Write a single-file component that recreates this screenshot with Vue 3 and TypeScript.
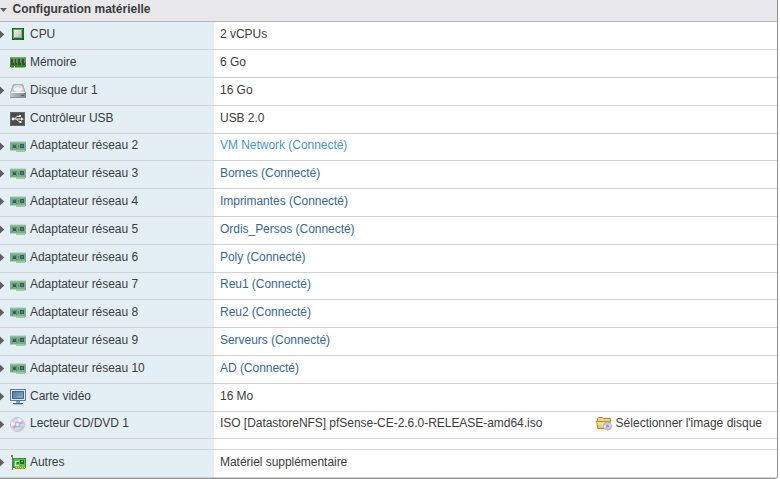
<script setup lang="ts">
type Icon = 'cpu' | 'memory' | 'disk' | 'usb' | 'nic' | 'video' | 'cd' | 'other'

interface Row {
  label: string
  value: string
  icon: Icon
  arrow?: boolean
  link?: boolean
  hover?: boolean
  short?: boolean
  action?: string
  gapAfter?: boolean
}

const rows: Row[] = [
  { label: 'CPU', value: '2 vCPUs', icon: 'cpu', arrow: true },
  { label: 'Mémoire', value: '6 Go', icon: 'memory' },
  { label: 'Disque dur 1', value: '16 Go', icon: 'disk', arrow: true },
  { label: 'Contrôleur USB', value: 'USB 2.0', icon: 'usb' },
  { label: 'Adaptateur réseau 2', value: 'VM Network (Connecté)', icon: 'nic', arrow: true, link: true, hover: true, short: true },
  { label: 'Adaptateur réseau 3', value: 'Bornes (Connecté)', icon: 'nic', arrow: true, link: true },
  { label: 'Adaptateur réseau 4', value: 'Imprimantes (Connecté)', icon: 'nic', arrow: true, link: true },
  { label: 'Adaptateur réseau 5', value: 'Ordis_Persos (Connecté)', icon: 'nic', arrow: true, link: true },
  { label: 'Adaptateur réseau 6', value: 'Poly (Connecté)', icon: 'nic', arrow: true, link: true },
  { label: 'Adaptateur réseau 7', value: 'Reu1 (Connecté)', icon: 'nic', arrow: true, link: true, short: true },
  { label: 'Adaptateur réseau 8', value: 'Reu2 (Connecté)', icon: 'nic', arrow: true, link: true },
  { label: 'Adaptateur réseau 9', value: 'Serveurs (Connecté)', icon: 'nic', arrow: true, link: true },
  { label: 'Adaptateur réseau 10', value: 'AD (Connecté)', icon: 'nic', arrow: true, link: true },
  { label: 'Carte vidéo', value: '16 Mo', icon: 'video', arrow: true },
  { label: 'Lecteur CD/DVD 1', value: 'ISO [DatastoreNFS] pfSense-CE-2.6.0-RELEASE-amd64.iso', icon: 'cd', arrow: true, short: true, action: "Sélectionner l'image disque", gapAfter: true },
  { label: 'Autres', value: 'Matériel supplémentaire', icon: 'other', arrow: true },
]
</script>

<template>
  <section class="panel">
    <svg class="defs" width="0" height="0" aria-hidden="true">
      <defs>
        <linearGradient id="gSilver" x1="0" y1="0" x2="1" y2="1">
          <stop offset="0" stop-color="#f4f4f4" /><stop offset="1" stop-color="#b4b4b4" />
        </linearGradient>
        <linearGradient id="gGreen" x1="0" y1="0" x2="0" y2="1">
          <stop offset="0" stop-color="#5aa545" /><stop offset="1" stop-color="#2a8d22" />
        </linearGradient>
        <linearGradient id="gDisk" x1="0" y1="0" x2="0" y2="1">
          <stop offset="0" stop-color="#aeb5bc" /><stop offset="1" stop-color="#dce2e8" />
        </linearGradient>
        <linearGradient id="gBase" x1="0" y1="0" x2="1" y2="0">
          <stop offset="0" stop-color="#c3cad0" /><stop offset="1" stop-color="#79828b" />
        </linearGradient>
        <linearGradient id="gScreen" x1="0" y1="0" x2="1" y2="1">
          <stop offset="0" stop-color="#4f7294" /><stop offset="1" stop-color="#93b2ce" />
        </linearGradient>
        <linearGradient id="gFolder" x1="0" y1="0" x2="0" y2="1">
          <stop offset="0" stop-color="#fbe9b6" /><stop offset="1" stop-color="#ecbc58" />
        </linearGradient>
        <linearGradient id="gDisc" x1="0" y1="0" x2="1" y2="1">
          <stop offset="0" stop-color="#c9cad5" /><stop offset="0.5" stop-color="#e6e3ee" /><stop offset="1" stop-color="#bcbfcc" />
        </linearGradient>
      </defs>
    </svg>

    <header class="title">
      <svg class="caret" width="8" height="5" viewBox="0 0 8 5"><path d="M0 0h7L3.500 4z" fill="#606060" /></svg>
      <span>Configuration matérielle</span>
    </header>

    <template v-for="row in rows" :key="row.label">
      <div class="row" :class="{ short: row.short }">
        <div class="name">
          <svg class="arrow" width="5" height="9" viewBox="0 0 5 9"><path v-if="row.arrow" d="M0 .5L4.200 4.500L0 8.500z" fill="#606060" /></svg>
          <svg class="icon" width="16" height="17" viewBox="0 0 16 17">
            <g v-if="row.icon === 'cpu'">
              <path d="M2 2h12v12H2z" fill="#16751a" />
              <path d="M3 3h10v1H4v9H3z" fill="#59af50" />
              <path d="M2 2h2v1H3v1H2zM12 2h2v2h-1V3h-1zM2 12h1v1h1v1H2zM13 12h1v2h-2v-1h1z" fill="#07540d" />
              <path d="M4 4h8v8H4z" fill="url(#gSilver)" />
              <path d="M4 11h8v1H4zM11 4h1v8h-1z" fill="#9ca49c" />
            </g>
            <g v-else-if="row.icon === 'memory'">
              <path d="M0 3h16v9H0z" fill="url(#gGreen)" />
              <path d="M0 3h16v1H0z" fill="#72a967" />
              <path d="M1 5h3v6H1zM5 5h2v6H5zM8 5h3v6H8zM12 5h3v6h-3z" fill="#404740" />
              <path d="M3 5h1v4H3zM6 5h1v4H6zM10 5h1v4h-1zM14 5h1v4h-1z" fill="#7a8477" />
              <path d="M0 12h4v1H0zM5 12h11v1H5z" fill="#278d1e" />
              <path d="M1 13h3v1H1zM5 13h10v1H5z" fill="#b0b365" />
            </g>
            <g v-else-if="row.icon === 'disk'" transform="translate(0 1)">
              <path d="M3 1h10l2.500 9v4.500H.5V10z" fill="url(#gDisk)" />
              <path d="M3.500 1.500L.5 10M12.500 1.500L15.500 10" stroke="#a4adb5" fill="none" />
              <ellipse cx="8" cy="5.500" rx="4.500" ry="3.200" fill="#eef1f4" />
              <path d="M5 4.500q3-2 6 0" stroke="#c6ccd2" fill="none" />
              <path d="M1 9h14v1H1z" fill="#f5f8fa" />
              <path d="M0 10h16v4H0z" fill="url(#gBase)" />
              <path d="M0 14h16v1H0z" fill="#8c949b" />
              <path d="M11 12h3v1h-3z" fill="#59616a" />
            </g>
            <g v-else-if="row.icon === 'usb'" transform="translate(0 1)">
              <path d="M0 1h15v14H0z" fill="#4b4b4b" />
              <path d="M.5 1.500h14v13H.5z" fill="none" stroke="#666" />
              <path d="M3 8h9M4.500 8L7 5.300h2.300M6.500 8L9 10.800h1.300" stroke="#f2f2f2" fill="none" />
              <circle cx="3" cy="8" r="1.400" fill="#f4f4f4" />
              <path d="M11 6.200L13.800 8L11 9.800zM9 4h2v2H9zM9.500 10h2v2h-2z" fill="#f4f4f4" />
            </g>
            <g v-else-if="row.icon === 'nic'">
              <path d="M0 3.700h16V13H0z" fill="#79b186" />
              <path d="M0 4h16v1H0z" fill="#91bd9c" />
              <path d="M0 12h6v1H0z" fill="#b4cdbd" />
              <path d="M6 12h9v2H6z" fill="#9dc5a0" />
              <path d="M7 13h8" stroke="#c4ce96" stroke-dasharray="1 1" />
              <path d="M2 6h5v4H2z" fill="#68977d" />
              <path d="M3 7h3v3H3zM10 6h4v4h-4z" fill="#3a5865" />
              <path d="M11 7h2v2h-2zM4 7h1v1H4z" fill="#597889" />
              <path d="M8 7h1v3H8zM2 10h1v1H2zM6 10h1v1H6z" fill="#4d9368" />
            </g>
            <g v-else-if="row.icon === 'video'" transform="translate(0 1)">
              <path d="M.5 .5h15v11H.5z" fill="#dde7ef" stroke="#5d7892" />
              <path d="M2 2h12v8H2z" fill="url(#gScreen)" />
              <path d="M2.500 2.500h11v7h-11z" fill="none" stroke="#3f668e" />
              <path d="M6 12h4v2H6z" fill="#8aa0b4" />
              <path d="M3 14h10v1H3z" fill="#47698a" />
              <path d="M4 15h8v1H4z" fill="#aebdc9" />
            </g>
            <g v-else-if="row.icon === 'cd'" transform="translate(0 .5)">
              <circle cx="7.500" cy="8" r="7" fill="url(#gDisc)" stroke="#c1c3cf" />
              <path d="M7.500 8L1.500 5.200A6.500 6.500 0 0 0 1.500 10z" fill="#f8f8fb" />
              <path d="M7.500 8L8.500 1.500A6.500 6.500 0 0 1 12.500 4z" fill="#f5f3fa" />
              <path d="M7.500 8L12 4l2 3z" fill="#d5a8e4" />
              <path d="M7.500 8L2 9.500L4.200 13z" fill="#c69fe0" />
              <path d="M7.500 8L13.500 10l-3 3z" fill="#b9d6e3" />
              <circle cx="7.500" cy="8" r="2.500" fill="#d5dbe8" stroke="#a2acc5" />
              <circle cx="7.500" cy="8" r="1" fill="#f8fafc" />
            </g>
            <g v-else>
              <path d="M1 1h2v15H2V3H1z" fill="#74747f" />
              <path d="M3 4h13v10H3z" fill="#239b25" />
              <path d="M4 5h11v8H4z" fill="#54c64c" />
              <path d="M5 7h4v1H6v3h3v1H5z" fill="#e0f3dc" />
              <path d="M7 8h2v2H7z" fill="#2f8030" />
              <path d="M10 6h4v4h-4z" fill="#216a28" />
              <path d="M11 7h2v1h-2z" fill="#86cd75" />
              <path d="M5 13h10v2H5z" fill="#a39b25" />
              <path d="M6 13.500h9" stroke="#efe366" stroke-dasharray="1 1" />
            </g>
          </svg>
          <span class="text">{{ row.label }}</span>
        </div>
        <div class="value">
          <a v-if="row.link" class="text link" :class="{ hover: row.hover }">{{ row.value }}</a>
          <span v-else class="text">{{ row.value }}</span>
          <span v-if="row.action" class="action">
            <svg class="folder" width="16" height="16" viewBox="0 0 16 16">
              <path d="M1.500 12.500v-10l1-1h4l1 1h7v3" fill="#eed18b" stroke="#b9852c" />
              <path d="M.5 5.500h14l-1.500 7H2z" fill="url(#gFolder)" stroke="#bf8c33" />
              <circle cx="11.500" cy="10" r="4" fill="#c9cad4" stroke="#b4b5c2" />
              <path d="M11.500 10L8 9v3zM11.500 10l3-2v2z" fill="#ece8f2" />
              <circle cx="11.500" cy="10" r="1.500" fill="#9b9fb2" />
            </svg>
            <span class="text">{{ row.action }}</span>
          </span>
        </div>
      </div>
      <div v-if="row.gapAfter" class="row spacer"><div class="name"></div></div>
    </template>
  </section>
</template>

<style>
body {
  background: #fff;
}
</style>

<style scoped>
.panel {
  box-sizing: border-box;
  width: 778px;
  height: 479px;
  overflow: hidden;
  border-right: 1px solid #929292;
  border-bottom: 1px solid #929292;
  border-bottom-right-radius: 4px;
  background: #fff;
  color: #3c3c3c;
  font: 12px/14px "Liberation Sans", Arial, sans-serif;
  letter-spacing: -0.035px;
  white-space: nowrap;
}
.defs {
  display: block;
}
.title {
  box-sizing: border-box;
  display: flex;
  height: 22px;
  padding-top: 2px;
  border-bottom: 1px solid #b5b5b5;
  background: #e8e8ea;
  font-weight: bold;
  letter-spacing: 0;
}
.caret {
  width: 8px;
  margin: 6px 4.500px 0 0;
}
.row {
  box-sizing: border-box;
  display: flex;
  height: 28px;
  border-bottom: 1px solid #d2d2d2;
}
.row.short {
  height: 27px;
}
.row.spacer {
  height: 11px;
}
.name {
  box-sizing: border-box;
  display: flex;
  width: 214px;
  background: #e3eff5;
}
.arrow {
  margin: 8px 5px 0 0;
}
.icon {
  margin: 4px 4px 0 0;
}
.text {
  padding-top: 5px;
}
.short .text {
  padding-top: 4px;
}
.value {
  display: flex;
  flex: 1;
  padding-left: 6px;
}
.link {
  color: #3568a0;
}
.link.hover {
  color: #4597cb;
}
.action {
  display: flex;
  margin-left: auto;
  padding-right: 15px;
  letter-spacing: 0;
}
.folder {
  margin: 4px 4px 0 0;
}
</style>
